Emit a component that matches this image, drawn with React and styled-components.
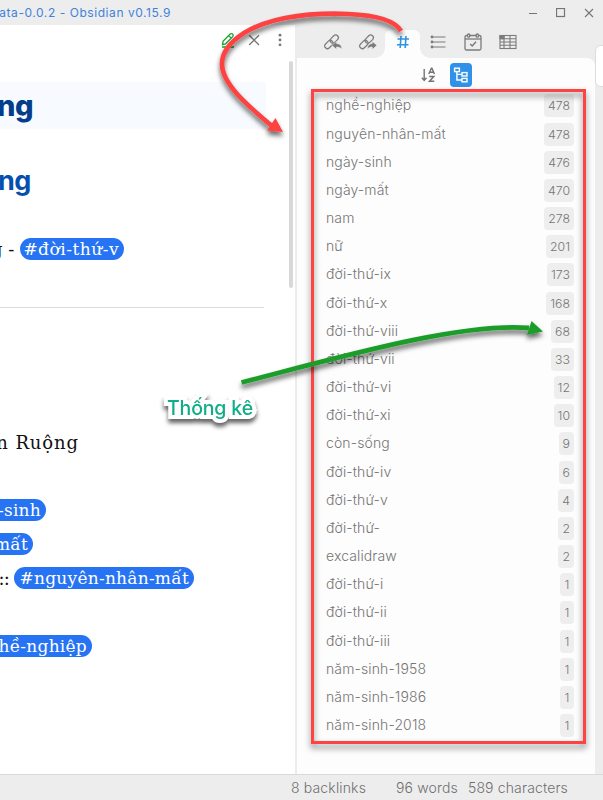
import React from 'react';
import styled, { createGlobalStyle } from 'styled-components';

const Global = createGlobalStyle`
  *, *::before, *::after { box-sizing: border-box; }
  body { margin: 0; font-family: Inter, "Noto Sans", sans-serif; color: #757575; background: #ededed; }
  svg { display: block; flex: none; }
`;
const Window = styled.div`
  position: relative; width: 603px; height: 800px; overflow: hidden;
  display: grid; grid-template-rows: 25px 749px 26px; background: #ededed;
`;
const TitleBar = styled.header`
  display: flex; justify-content: space-between; align-items: center; height: 25px;
`;
const Title = styled.div`
  width: 171px; display: flex; justify-content: flex-end; overflow: hidden; white-space: nowrap;
  font-size: 12px; letter-spacing: 0.56px; color: #3f83dc; padding-bottom: 1px;
`;
const WindowButtons = styled.div`
  display: flex; gap: 18px; align-items: center; padding-right: 9px;
`;
const Body = styled.main`
  display: grid; grid-template-columns: 295px 2px 298px 8px; min-height: 0;
`;
const Editor = styled.section`
  background: #fff; display: grid; grid-template-columns: 287px 8px; grid-template-rows: 33px 716px;
`;
const EditorActions = styled.div`
  grid-column: 1 / 3; display: flex; justify-content: flex-end; align-items: flex-start;
  gap: 11px; padding: 7px 8px 0 0;
`;
const Note = styled.article`
  overflow: hidden; padding-top: 24px; display: flex; flex-direction: column; align-items: flex-start;
`;
const ScrollTrack = styled.div`padding: 3px 0 0 2px;`;
const ScrollThumb = styled.div`width: 4px; height: 227px; border-radius: 2px; background: #d8d8d8;`;
const Heading = styled.h1`
  margin: 0; width: ${p => (p.$sub ? 31 : 266)}px; height: ${p => (p.$sub ? 44 : 47)}px;
  display: flex; align-items: center; font-size: ${p => (p.$sub ? 27 : 29)}px; font-weight: ${p => (p.$sub ? 750 : 800)};
  letter-spacing: ${p => (p.$sub ? '-0.4px' : '-0.5px')}; color: ${p => (p.$sub ? '#0550ae' : '#033d8b')};
  background: ${p => (p.$sub ? 'transparent' : '#f7fbff')}; padding-bottom: 1px;
  margin-bottom: ${p => (p.$sub ? 27 : 30)}px;
`;
const Clip = styled.span`
  width: ${p => p.$w}px; display: flex; justify-content: flex-end; overflow: hidden; white-space: pre; flex: none;
  letter-spacing: ${p => p.$ls || 0}px;
`;
const Line = styled.div`
  display: flex; align-items: center; height: 34px; margin-top: ${p => p.$top || 0}px; color: #111;
  white-space: nowrap; font-family: "DejaVu Serif", serif; font-size: 18px;
`;
const TagClip = styled.span`
  width: ${p => p.$w}px; height: 22px; display: flex; justify-content: flex-end; overflow: hidden; flex: none;
  border-radius: ${p => (p.$cut ? '0 11px 11px 0' : '11px')}; background: #2673f3; color: #fff;
  padding-right: 5px; line-height: 23px; font-size: 17px; letter-spacing: ${p => p.$ls ?? 0.25}px;
`;
const Rule = styled.div`width: 264px; height: 1px; background: #dcdcdc; margin-top: 41px;`;
const Divider = styled.div`background: #ececec;`;
const Sidebar = styled.aside`display: grid; grid-template-rows: 33px 716px;`;
const Tabs = styled.nav`
  display: flex; align-items: flex-end; padding-left: 18px;
`;
const Tab = styled.div`
  position: relative; width: 35px; height: 28px; display: flex; align-items: center; justify-content: center;
  color: ${p => (p.$active ? '#2f93e6' : '#7b7b7b')};
  background: ${p => (p.$active ? '#fdfdfd' : 'transparent')}; border-radius: 6px 6px 0 0; padding-bottom: 4px;
  &::before, &::after {
    content: ""; display: ${p => (p.$active ? 'block' : 'none')};
    position: absolute; bottom: 0; width: 10px; height: 10px;
  }
  &::before { right: 100%; background: radial-gradient(circle at 0 0, transparent 9.5px, #fdfdfd 10px); }
  &::after { left: 100%; background: radial-gradient(circle at 100% 0, transparent 9.5px, #fdfdfd 10px); }
`;
const Panel = styled.div`
  background: #fdfdfd; border-top-right-radius: 8px; display: flex; flex-direction: column;
`;
const PanelTools = styled.div`
  height: 33.75px; flex: none; display: flex; align-items: center; gap: 13px; padding-left: 124px;
`;
const TreeButton = styled.div`
  width: 22px; height: 24px; border-radius: 4px; background: #2f92e8; display: flex; align-items: center; justify-content: center;
`;
const TagRow = styled.div`
  height: 28.18px; flex: none; display: flex; justify-content: space-between; align-items: center; padding: 0 21px 0 29px;
`;
const TagName = styled.span`
  font-size: 14px; font-weight: 350; letter-spacing: 0.12px; line-height: 20px; white-space: nowrap; padding-bottom: 1px;
`;
const Count = styled.span`
  height: 23px; min-width: 14px; padding: 0 4px; border-radius: 4px; background: #eee; font-size: 12.3px; font-weight: 350;
  line-height: 23px; text-align: center;
`;
const Gutter = styled.div`padding-top: 20px; overflow: hidden;`;
const Handle = styled.div`
  width: 14px; height: 42px; border: 1px solid #dcdcdc; border-radius: 6px; background: #fff;
`;
const StatusBar = styled.footer`
  border-top: 1px solid #d9d9d9; display: flex; justify-content: flex-end; align-items: center;
  padding: 0 35px 0 0; font-size: 14px; font-weight: 350; color: #707070; white-space: nowrap;
`;
const Status = styled.span`margin-left: ${p => p.$gap}px; letter-spacing: 0.15px;`;
const Highlight = styled.div`
  position: absolute; left: 311px; top: 89px; width: 275px; height: 655px; border: 3px solid #fd4343;
  filter: drop-shadow(0 4px 3px rgba(0,0,0,.5));
`;
const Annotations = styled.svg`position: absolute; inset: 0; pointer-events: none;`;
const Callout = styled.div`
  position: absolute; left: 167px; top: 395px; font: 450 19.5px/26px Inter, sans-serif; color: #0fae87;
  letter-spacing: -0.15px; white-space: nowrap;
  -webkit-text-stroke: 8px #fff; paint-order: stroke fill; stroke-linejoin: round;
  filter: drop-shadow(0 4px 2px rgba(0,0,0,.6));
`;

const stroke = { fill: 'none', stroke: 'currentColor' };
const LinkIcon = ({ out }) => (
  <svg width="20" height="20" viewBox="0 0 20 20" {...stroke} strokeWidth="1.2" strokeLinecap="round">
    <g transform="rotate(-45 8.5 10)">
      <rect x="0.2" y="7.2" width="9.4" height="5.4" rx="2.7" />
      <rect x="7.8" y="7.2" width="9.4" height="5.4" rx="2.7" />
    </g>
    {out
      ? <path d="M18.8 13.2l-4.5-3.8v2.2c-3.2.2-4.8 2-4.9 5.4 1.5-1.6 2.6-2 4.9-2v2.2z" fill="currentColor" stroke="#ededed" strokeWidth=".5" />
      : <path d="M9 13.2l4.5-3.8v2.2c3.6.2 5.2 2 5.3 5.4-1.6-1.6-3-2-5.3-2v2.2z" fill="currentColor" stroke="#ededed" strokeWidth=".5" />}
  </svg>
);
const HashIcon = () => (
  <svg width="14" height="14" viewBox="0 0 14 14" {...stroke} strokeWidth="1.6"><path d="M1.5 4h11.5M1 9.7h11.5M5 1L4.2 13M10 1L9.2 13" /></svg>
);
const ListIcon = () => (
  <svg width="16" height="14" viewBox="0 0 16 14" {...stroke} strokeWidth="1.1">
    <path d="M1 2h14.5M1 7h14.5M1 12h14.5" />
    {[2, 7, 12].map(y => <circle key={y} cx="2" cy={y} r="1.4" fill="currentColor" stroke="none" />)}
  </svg>
);
const CalendarIcon = () => (
  <svg width="18" height="18" viewBox="0 0 18 18" {...stroke} strokeWidth="1.3">
    <rect x="1" y="2.5" width="16" height="14.5" rx="1.5" /><path d="M1 6h16" />
    <rect x="3.6" y="1" width="2.2" height="3.2" rx="1" fill="#ededed" /><rect x="12.2" y="1" width="2.2" height="3.2" rx="1" fill="#ededed" />
    <path d="M6.2 11l2 2L12 8.8" strokeWidth="1.5" />
  </svg>
);
const TableIcon = () => (
  <svg width="18" height="16" viewBox="0 0 18 16" {...stroke} strokeWidth="1.1">
    <rect x="1" y="1.5" width="16" height="13" /><path d="M1 4.8h16M1 8h16M1 11.3h16M5 1.5v13M11 1.5v13" />
    <path d="M1 1.5h4v3.3H1z" fill="currentColor" />
  </svg>
);
const SortIcon = () => (
  <svg width="16" height="16" viewBox="0 0 16 16" {...stroke} strokeWidth="1.4">
    <path d="M3.2 2v11M.9 10.8l2.3 2.7 2.3-2.7" />
    <path d="M7.8 7l2.6-5.8h.5L13.4 7M8.8 5.2h3.8M8.2 9.6h4.6l-4.3 4.7h4.8" strokeWidth="1.5" />
  </svg>
);
const TreeIcon = () => (
  <svg width="16" height="16" viewBox="0 0 16 16" fill="none" stroke="#fff" strokeWidth="1.4">
    <rect x="1.6" y="1.2" width="4.8" height="3.4" /><rect x="9" y="5.6" width="5" height="3.4" /><rect x="9" y="11.4" width="5" height="3.4" />
    <path d="M3.9 4.6V13H9M3.9 7.4H9" />
  </svg>
);

const tags = [
  ['nghề-nghiệp', 478], ['nguyên-nhân-mất', 478], ['ngày-sinh', 476], ['ngày-mất', 470], ['nam', 278],
  ['nữ', 201], ['đời-thứ-ix', 173], ['đời-thứ-x', 168], ['đời-thứ-viii', 68], ['đời-thứ-vii', 33],
  ['đời-thứ-vi', 12], ['đời-thứ-xi', 10], ['còn-sống', 9], ['đời-thứ-iv', 6], ['đời-thứ-v', 4],
  ['đời-thứ-', 2], ['excalidraw', 2], ['đời-thứ-i', 1], ['đời-thứ-ii', 1], ['đời-thứ-iii', 1],
  ['năm-sinh-1958', 1], ['năm-sinh-1986', 1], ['năm-sinh-2018', 1],
];

export default function App() {
  return (
    <Window>
      <Global />
      <TitleBar>
        <Title>ata-0.0.2 - Obsidian v0.15.9</Title>
        <WindowButtons>
          <svg width="10" height="10" {...stroke}><path d="M1 5.5h8" /></svg>
          <svg width="10" height="10" {...stroke}><rect x=".5" y=".5" width="8" height="8" strokeWidth="1.2" /></svg>
          <svg width="10" height="10" {...stroke}><path d="M1 1l8 8M9 1l-8 8" strokeWidth="1.1" /></svg>
        </WindowButtons>
      </TitleBar>
      <Body>
        <Editor>
          <EditorActions>
            <svg width="14" height="16" viewBox="0 0 14 16" fill="none" stroke="#15a32c" strokeWidth="1.3">
              <path d="M1.5 12.6L2 9.3 9.2 2.1q1.2-1 2.4 0t.1 2.5L4.6 11.8zM7.7 3.6l2.5 2.5M1 15h12" />
            </svg>
            <svg width="16" height="16" viewBox="0 0 16 16" {...stroke} strokeWidth="1.3"><path d="M3.2 3.2l9.8 9.8M13 3.2L3.2 13" /></svg>
            <svg width="14" height="16" viewBox="1 0 14 16" fill="#777"><circle cx="8" cy="3.2" r="1.4" /><circle cx="8" cy="8" r="1.4" /><circle cx="8" cy="12.8" r="1.4" /></svg>
          </EditorActions>
          <Note>
            <Heading><Clip $w={33} $ls={-0.5}>ng</Clip></Heading>
            <Heading as="h2" $sub><Clip $w={31} $ls={-0.4}>ng</Clip></Heading>
            <Line $top={2}><Clip $w={20}>g - </Clip><TagClip $w={104} $ls={0.5}>#đời-thứ-v</TagClip></Line>
            <Rule />
            <Line $top={117}><Clip $w={79} $ls={0.9}>n Ruộng</Clip></Line>
            <Line $top={34}><TagClip $w={46} $cut>-sinh</TagClip></Line>
            <Line><TagClip $w={33} $cut>mất</TagClip></Line>
            <Line><Clip $w={14} $ls={-0.8}>t:: </Clip><TagClip $w={180}>#nguyên-nhân-mất</TagClip></Line>
            <Line $top={34}><TagClip $w={92} $cut>hề-nghiệp</TagClip></Line>
          </Note>
          <ScrollTrack><ScrollThumb /></ScrollTrack>
        </Editor>
        <Divider />
        <Sidebar>
          <Tabs>
            <Tab><LinkIcon /></Tab>
            <Tab><LinkIcon out /></Tab>
            <Tab $active><HashIcon /></Tab>
            <Tab><ListIcon /></Tab>
            <Tab><CalendarIcon /></Tab>
            <Tab><TableIcon /></Tab>
          </Tabs>
          <Panel>
            <PanelTools><SortIcon /><TreeButton><TreeIcon /></TreeButton></PanelTools>
            {tags.map(([name, count]) => (
              <TagRow key={name}><TagName>{name}</TagName><Count>{count}</Count></TagRow>
            ))}
          </Panel>
        </Sidebar>
        <Gutter><Handle /></Gutter>
      </Body>
      <StatusBar>
        <Status $gap={0}>8 backlinks</Status><Status $gap={30}>96 words</Status><Status $gap={10}>589 characters</Status>
      </StatusBar>
      <Highlight />
      <Annotations width="603" height="800" viewBox="0 0 603 800">
        <defs>
          <filter id="shade" x="-20%" y="-30%" width="140%" height="180%">
            <feDropShadow dx="0" dy="4" stdDeviation="2.5" floodColor="#000" floodOpacity=".6" />
          </filter>
        </defs>
        <g filter="url(#shade)">
          <path d="M401 31C388 8 312 13 285 18C245 26 222 45 222 64C222 84 248 106 272 126" fill="none" stroke="#fd4343" strokeWidth="4.7" />
          <path d="M283 132L275.5 118L267 130.500z" fill="#fd4343" />
        </g>
        <g filter="url(#shade)">
          <path d="M241.500 382.500C340 357 462 322 529 328" fill="none" stroke="#1f9d2b" strokeWidth="4.8" />
          <path d="M543 331.500L531.500 321L527 335z" fill="#1f9d2b" />
        </g>
      </Annotations>
      <Callout>Thống kê</Callout>
    </Window>
  );
}
